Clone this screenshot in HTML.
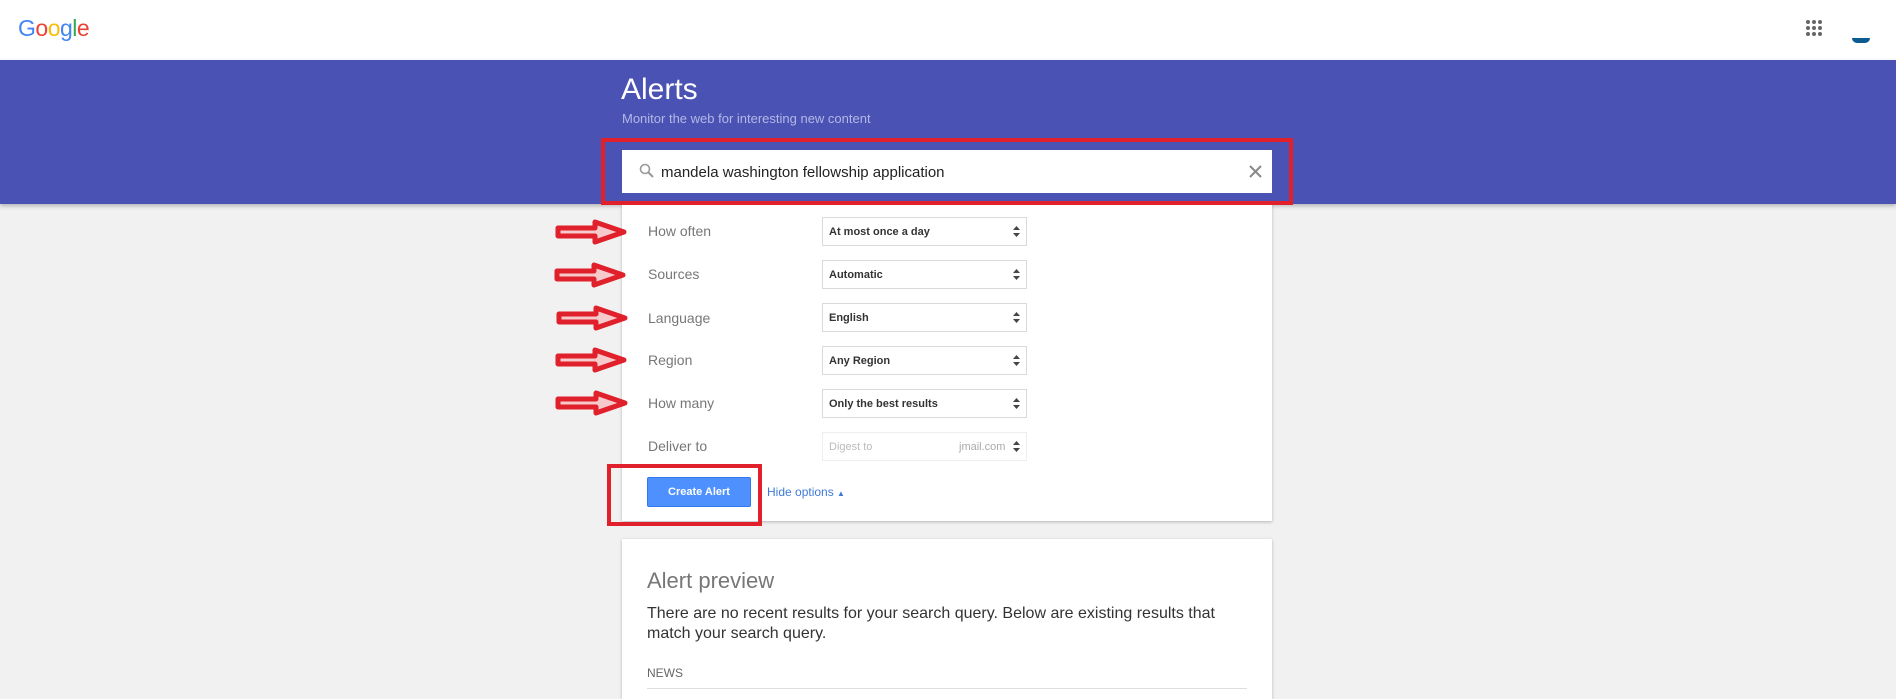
<!DOCTYPE html>
<html><head><meta charset="utf-8"><style>
*{margin:0;padding:0;box-sizing:border-box}
body{width:1896px;height:691px;overflow:hidden;background:#f1f1f1;font-family:"Liberation Sans",Arial,sans-serif;position:relative}
.hdr{position:absolute;left:0;top:0;width:1896px;height:60px;background:#fff}
.band{position:absolute;left:0;top:60px;width:1896px;height:144px;background:#4a52b4;box-shadow:0 2px 4px rgba(0,0,0,.25)}
.abs{position:absolute}
.card{position:absolute;background:#fff;box-shadow:0 1px 3px rgba(0,0,0,.25)}
.lbl{position:absolute;left:648px;font-size:14px;color:#777}
.sel{position:absolute;left:822px;width:205px;height:29px;border:1px solid #d9d9d9;font-size:11px;font-weight:bold;color:#333;padding-left:6px;padding-top:8px;background:#fff}
.sel .ar{position:absolute;right:6px;top:8px;width:7px;height:11px}
.red{position:absolute;border:4px solid #e0202a}
</style></head><body>
<div class="hdr"></div>
<div class="abs" style="left:18px;top:15px;font-size:23px;letter-spacing:-0.5px;"><span style="color:#4285f4">G</span><span style="color:#ea4335">o</span><span style="color:#fbbc05">o</span><span style="color:#4285f4">g</span><span style="color:#34a853">l</span><span style="color:#ea4335">e</span></div>
<svg class="abs" style="left:1805px;top:19px" width="18" height="18"><g fill="#666"><circle cx="3" cy="3" r="2"/><circle cx="9" cy="3" r="2"/><circle cx="15" cy="3" r="2"/><circle cx="3" cy="9" r="2"/><circle cx="9" cy="9" r="2"/><circle cx="15" cy="9" r="2"/><circle cx="3" cy="15" r="2"/><circle cx="9" cy="15" r="2"/><circle cx="15" cy="15" r="2"/></g></svg>
<div class="abs" style="left:1852px;top:38px;width:18px;height:5px;background:#0b5b91;border-radius:0 0 9px 9px"></div>
<div class="band"></div>
<div class="abs" style="left:621px;top:73px;font-size:30px;color:#fff">Alerts</div>
<div class="abs" style="left:622px;top:111px;font-size:13px;color:#b3b8e6">Monitor the web for interesting new content</div>
<div class="card" style="left:622px;top:204px;width:650px;height:317px"></div>
<div class="abs" style="left:622px;top:150px;width:650px;height:43px;background:#fff"></div>
<svg class="abs" style="left:639px;top:163px" width="16" height="16"><circle cx="6" cy="6" r="4.5" fill="none" stroke="#999" stroke-width="1.6"/><line x1="9.5" y1="9.5" x2="14" y2="14" stroke="#999" stroke-width="2"/></svg>
<div class="abs" style="left:661px;top:164px;font-size:15px;color:#222">mandela washington fellowship application</div>
<svg class="abs" style="left:1249px;top:165px" width="13" height="13"><path d="M1 1L12 12M12 1L1 12" stroke="#888" stroke-width="2"/></svg>
<div class="red" style="left:601px;top:138px;width:692px;height:67px"></div>

<div class="lbl" style="top:223px">How often</div>
<div class="lbl" style="top:266px">Sources</div>
<div class="lbl" style="top:310px">Language</div>
<div class="lbl" style="top:352px">Region</div>
<div class="lbl" style="top:395px">How many</div>
<div class="lbl" style="top:438px">Deliver to</div>

<div class="sel" style="top:217px">At most once a day<svg class="ar" viewBox="0 0 7 11"><path d="M3.5 0L7 4H0zM3.5 11L0 7h7z" fill="#444"/></svg></div>
<div class="sel" style="top:260px">Automatic<svg class="ar" viewBox="0 0 7 11"><path d="M3.5 0L7 4H0zM3.5 11L0 7h7z" fill="#444"/></svg></div>
<div class="sel" style="top:303px">English<svg class="ar" viewBox="0 0 7 11"><path d="M3.5 0L7 4H0zM3.5 11L0 7h7z" fill="#444"/></svg></div>
<div class="sel" style="top:346px">Any Region<svg class="ar" viewBox="0 0 7 11"><path d="M3.5 0L7 4H0zM3.5 11L0 7h7z" fill="#444"/></svg></div>
<div class="sel" style="top:389px">Only the best results<svg class="ar" viewBox="0 0 7 11"><path d="M3.5 0L7 4H0zM3.5 11L0 7h7z" fill="#444"/></svg></div>
<div class="sel" style="top:432px;border-color:#eee;color:#bbb;font-weight:normal">Digest to<span style="position:absolute;left:136px;color:#aaa">jmail.com</span><svg class="ar" viewBox="0 0 7 11"><path d="M3.5 0L7 4H0zM3.5 11L0 7h7z" fill="#444"/></svg></div>

<svg class="abs" style="left:552px;top:218px" width="82" height="230">
<g fill="#f6c9cb" stroke="#e0202a" stroke-width="5" stroke-linejoin="round">
<path d="M6 10H43V4L72 14L43 24V18H6Z"/>
<path d="M5 53H42V47L71 57L42 67V61H5Z"/>
<path d="M7 96H44V90L73 100L44 110V104H7Z"/>
<path d="M6 138H43V132L72 142L43 152V146H6Z"/>
<path d="M6 181H44V175L73 185L44 195V189H6Z"/>
</g></svg>

<div class="abs" style="left:647px;top:477px;width:104px;height:30px;background:#4d90fe;border:1px solid #3079ed;border-radius:2px;color:#fff;font-size:11px;font-weight:bold;text-align:center;line-height:28px">Create Alert</div>
<div class="abs" style="left:767px;top:485px;font-size:12px;color:#3f7ad9">Hide options <span style="font-size:8px">▲</span></div>
<div class="red" style="left:607px;top:464px;width:155px;height:62px"></div>

<div class="card" style="left:622px;top:539px;width:650px;height:160px"></div>
<div class="abs" style="left:647px;top:568px;font-size:22px;color:#777">Alert preview</div>
<div class="abs" style="left:647px;top:604px;width:590px;font-size:16px;line-height:20px;color:#333">There are no recent results for your search query. Below are existing results that match your search query.</div>
<div class="abs" style="left:647px;top:666px;font-size:12px;color:#666">NEWS</div>
<div class="abs" style="left:647px;top:688px;width:600px;height:1px;background:#ddd"></div>
</body></html>
